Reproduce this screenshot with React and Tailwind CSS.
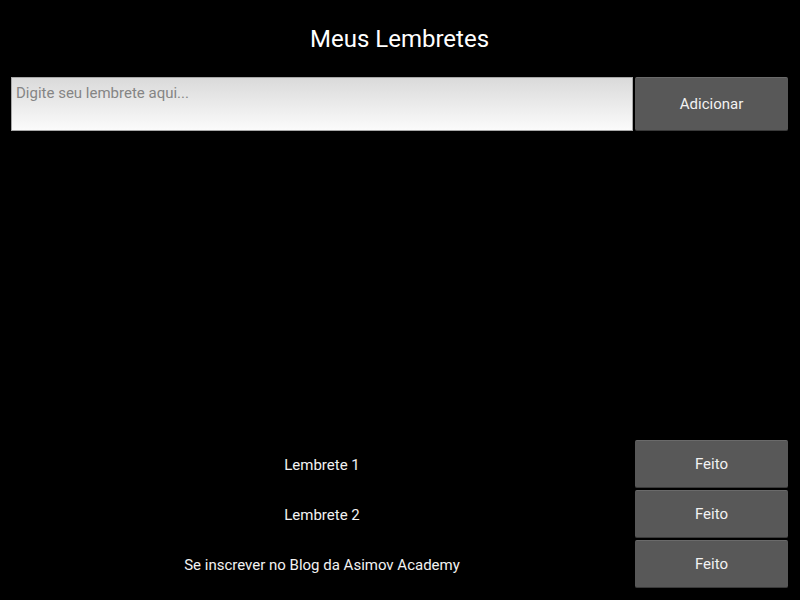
import React from 'react'

const font = { fontFamily: 'Roboto, "Noto Sans", sans-serif' }

const reminders = ['Lembrete 1', 'Lembrete 2', 'Se inscrever no Blog da Asimov Academy']

// ─── GrayButton ───────────────────────────────────────────────────────────────
function GrayButton({ children, className = '' }) {
  return (
    <button
      className={
        'w-[153px] flex-shrink-0 flex items-center justify-center rounded-[2px] bg-[#585858] border-t border-[#6a6a6a] border-b border-b-[#3a3a3a] text-[15px] text-[#f2f2f2] ' +
        className
      }
    >
      {children}
    </button>
  )
}

export default function App() {
  return (
    <div className="w-[800px] h-[600px] bg-black flex flex-col pl-[11px] pr-[12px] pb-[12px]" style={font}>
      <div className="h-[77px] flex items-center justify-center">
        <h1 className="text-[24px] text-white leading-none">Meus Lembretes</h1>
      </div>

      <div className="flex gap-[2px] h-[54px]">
        <div className="flex-1 border border-[#a8a8a8] bg-gradient-to-b from-[#dadada] to-[#fbfbfb] px-[4px] pt-[3px]">
          <span className="text-[15px] text-[#858585]">Digite seu lembrete aqui...</span>
        </div>
        <GrayButton>Adicionar</GrayButton>
      </div>

      <div className="flex-1 flex flex-col justify-end gap-[2px]">
        {reminders.map((r) => (
          <div key={r} className="flex gap-[2px] h-[48px]">
            <div className="flex-1 flex items-center justify-center pt-[2px] text-[15px] text-[#f2f2f2]">{r}</div>
            <GrayButton className="pt-[1px]">Feito</GrayButton>
          </div>
        ))}
      </div>
    </div>
  )
}
